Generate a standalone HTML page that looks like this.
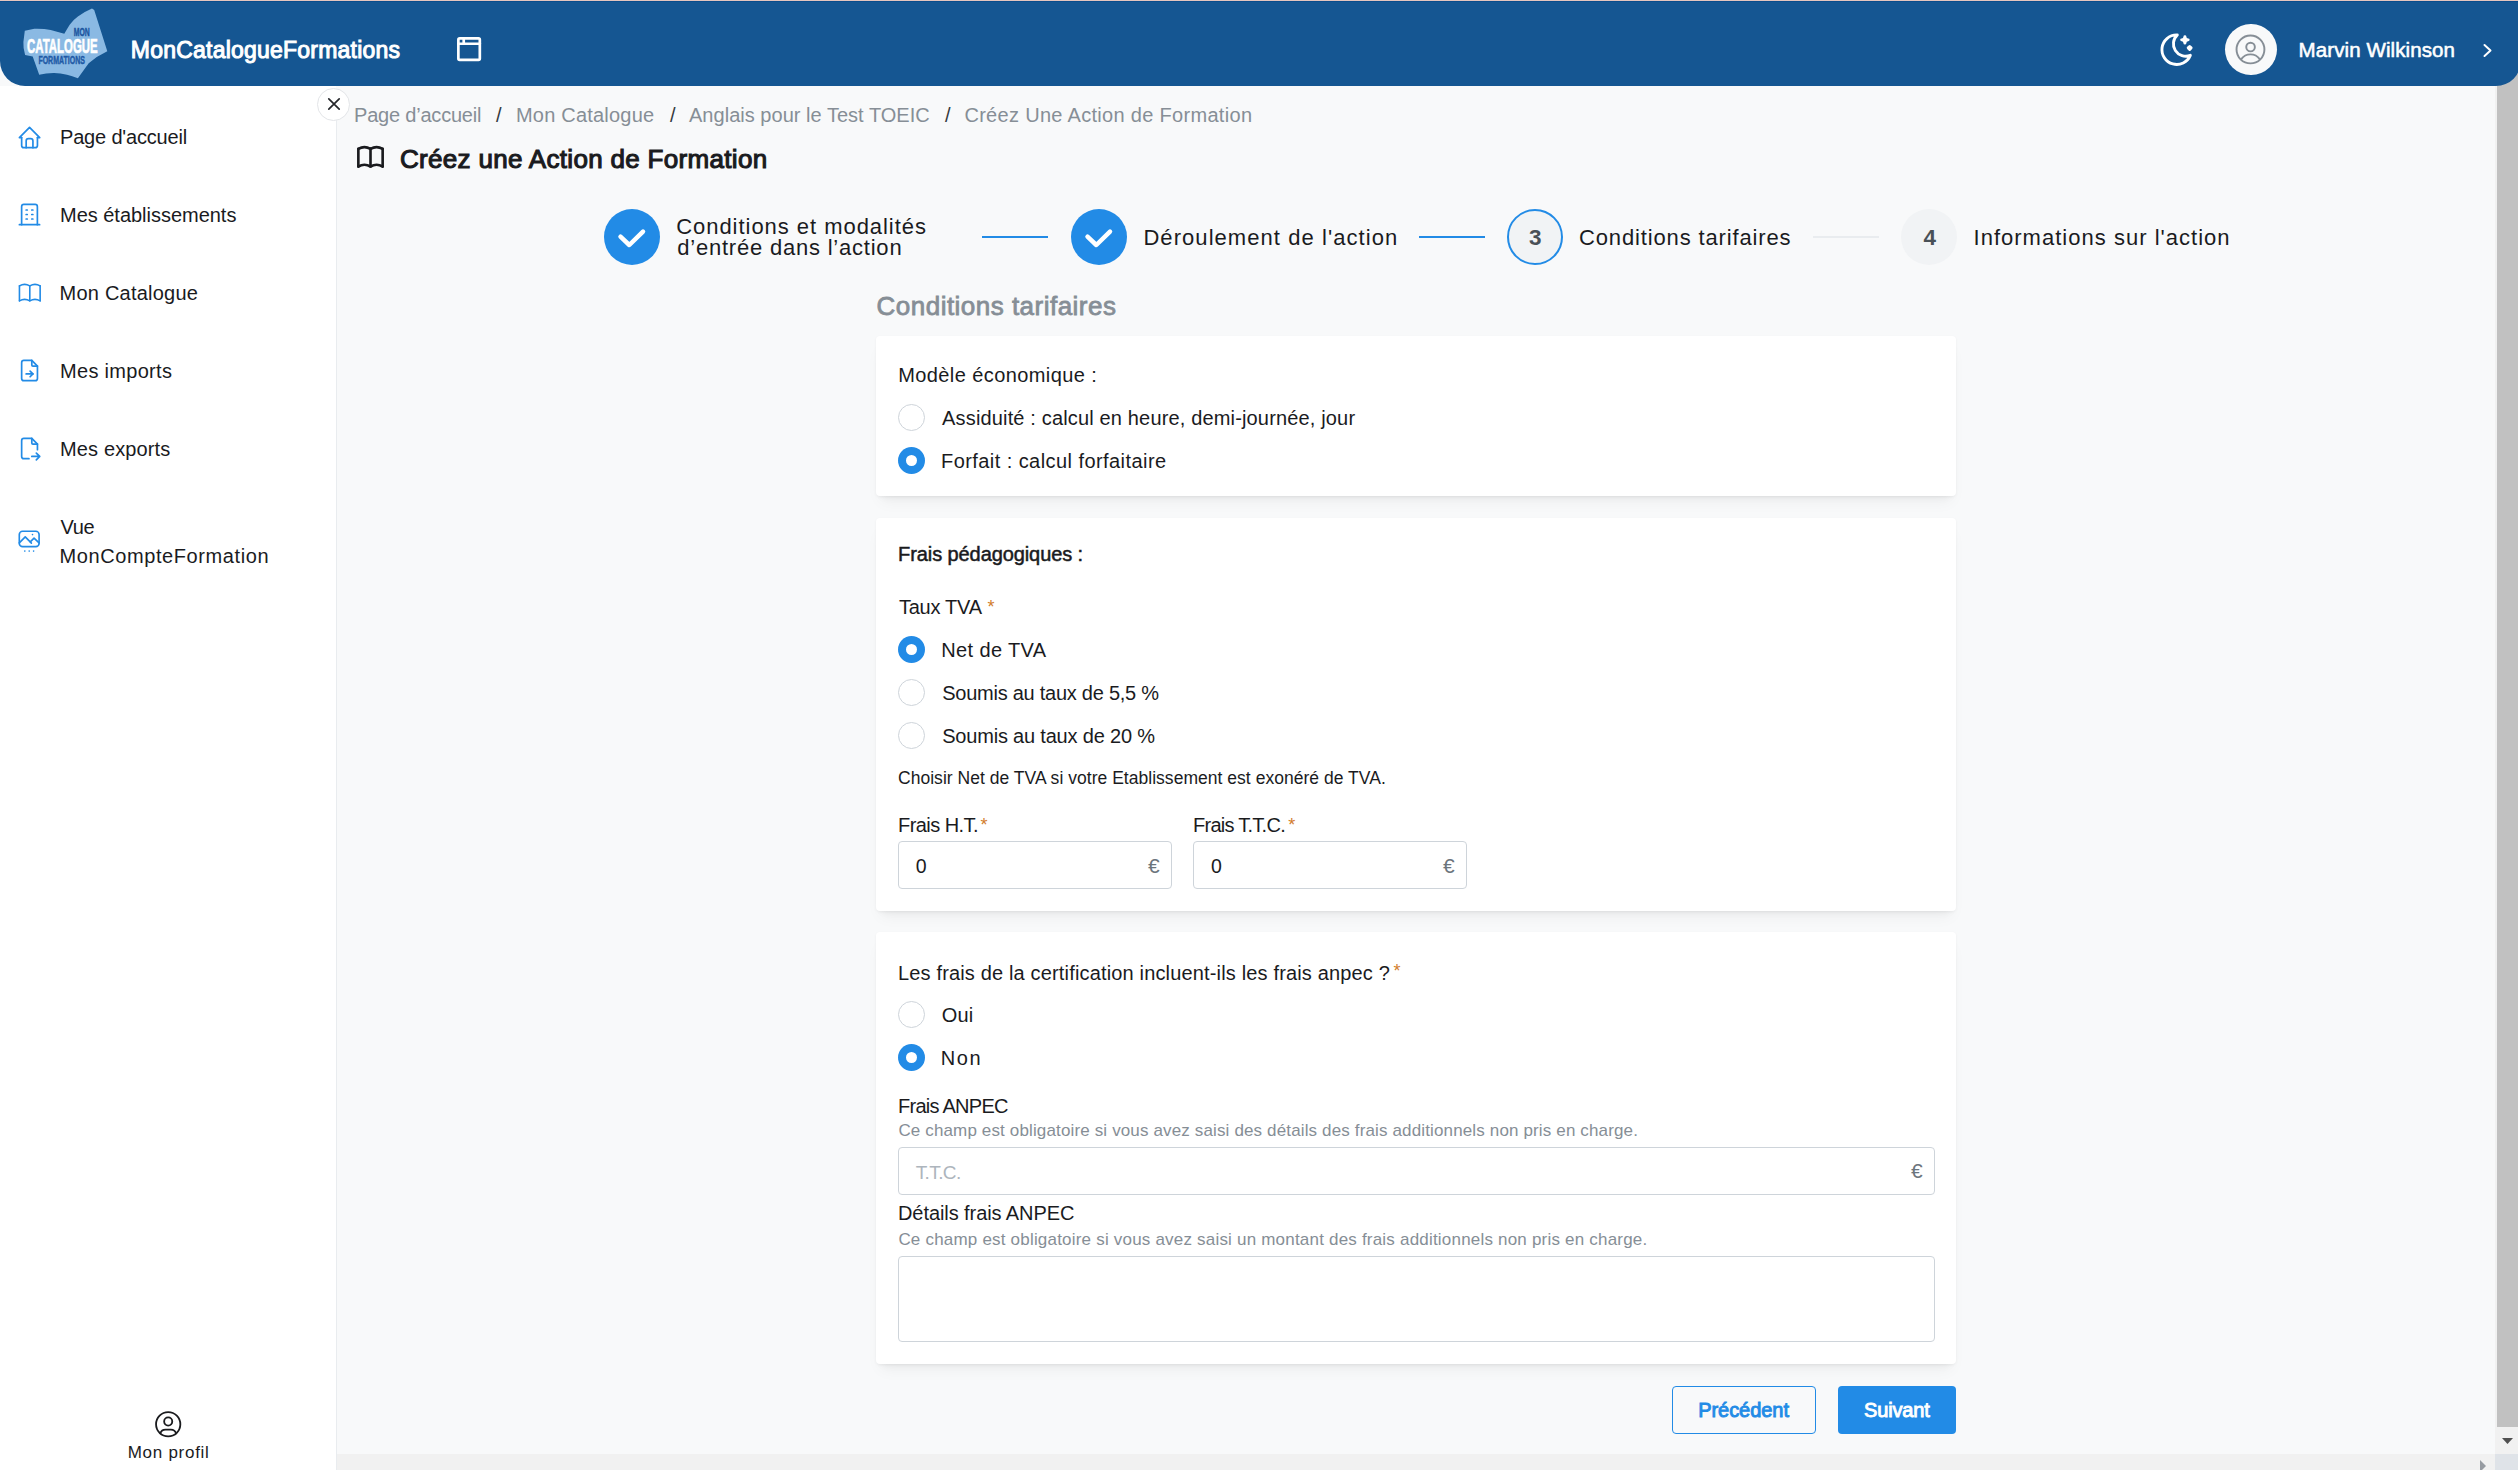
<!DOCTYPE html>
<html lang="fr">
<head>
<meta charset="utf-8">
<title>Créez une Action de Formation</title>
<style>
*{box-sizing:border-box;margin:0;padding:0}
html,body{width:2518px;height:1470px;overflow:hidden;background:#f8f9fa;font-family:"Liberation Sans",sans-serif}
.a{position:absolute}
.t{position:absolute;white-space:pre;line-height:1;font-family:"Liberation Sans",sans-serif}
.card{position:absolute;left:876px;width:1080px;background:#fff;border-radius:4px;box-shadow:0 1px 3px rgba(0,0,0,.05),rgba(0,0,0,.05) 0 10px 15px -5px,rgba(0,0,0,.04) 0 7px 7px -5px}
.rad{position:absolute;left:898px;width:27px;height:27px;border-radius:50%;border:1px solid #ced4da;background:#fff}
.rad.on{border:none;background:#228be6}
.rad.on::after{content:"";position:absolute;left:8px;top:8px;width:11px;height:11px;border-radius:50%;background:#fff}
.inp{position:absolute;border:1px solid #ced4da;border-radius:4px;background:#fff}
svg.ic{position:absolute;overflow:visible}
</style>
</head>
<body>
<!-- scrollbars -->
<div class="a" style="left:2495px;top:0;width:23px;height:1454px;background:#f1f1f1"></div>
<div class="a" style="left:2497px;top:40px;width:21px;height:1387px;background:#c1c1c1"></div>
<svg class="ic" style="left:2500px;top:1434px" width="16" height="14"><path d="M2 4h11l-5.5 6z" fill="#505050"/></svg>
<div class="a" style="left:337px;top:1454px;width:2158px;height:16px;background:#f1f1f1"></div>
<svg class="ic" style="left:2478px;top:1458px" width="12" height="12"><path d="M2 2v12l6-6z" fill="#969ba1"/></svg>
<div class="a" style="left:2495px;top:1454px;width:23px;height:16px;background:#dfe3e8"></div>

<!-- top line + header -->
<div class="a" style="left:0;top:0;width:2518px;height:1px;background:#e5c5be"></div>
<div class="a" style="left:0;top:1px;width:2521px;height:84.6px;background:#155692;border-top:1px solid #0a4c8c;border-radius:0 0 25px 25px"></div>

<!-- logo -->
<svg class="ic" style="left:0;top:0" width="120" height="86">
<path d="M24.8 30.7 L34.3 28.8 Q44 28.6 50.7 29.9 L64.3 33.7 Q67 29 69.7 24.7 Q73 20 77.9 16.5 Q85 11.5 92 8.6 L94.2 10 L107.3 51.3 Q97 56 88.7 63.3 L77.9 78.3 Q72 76 67 74.7 Q60 73 53.4 73.1 Q46 73.3 39.2 74.7 L32.7 56.5 L25.1 54.9 Q23 48 23.4 42.1 Z" fill="#8ab9e3"/>
<text x="73.8" y="35.6" font-family="Liberation Sans" font-weight="700" font-size="11.6" fill="#1b559f" stroke="#1b559f" stroke-width="0.45" textLength="16" lengthAdjust="spacingAndGlyphs">MON</text>
<text x="27" y="52.7" font-family="Liberation Sans" font-weight="700" font-size="20.8" fill="#ffffff" stroke="#ffffff" stroke-width="0.7" textLength="70.7" lengthAdjust="spacingAndGlyphs">CATALOGUE</text>
<text x="38.4" y="64.4" font-family="Liberation Sans" font-weight="700" font-size="11.8" fill="#1f5aa6" stroke="#1f5aa6" stroke-width="0.45" textLength="46.5" lengthAdjust="spacingAndGlyphs">FORMATIONS</text>
</svg>

<!-- browser icon -->
<svg class="ic" style="left:453.1px;top:32.9px" width="32.2" height="32.2" viewBox="0 0 24 24" fill="none" stroke="#fff" stroke-width="2" stroke-linecap="round" stroke-linejoin="round"><path d="M4 5a1 1 0 0 1 1-1h14a1 1 0 0 1 1 1v14a1 1 0 0 1-1 1h-14a1 1 0 0 1-1-1z"/><path d="M4 8h16"/><path d="M8 4v4"/></svg>

<!-- moon -->
<svg class="ic" style="left:2156.9px;top:29.9px" width="39.4" height="39.4" viewBox="0 0 24 24" fill="none" stroke="#fff" stroke-width="1.75" stroke-linecap="round" stroke-linejoin="round"><path d="M12 3c.132 0 .263 0 .393 0a7.5 7.5 0 0 0 7.92 12.446a9 9 0 1 1 -8.313 -12.454z"/><path d="M17 4a2 2 0 0 0 2 2a2 2 0 0 0 -2 2a2 2 0 0 0 -2 -2a2 2 0 0 0 2 -2" fill="#fff"/><path d="M19.9 10l.9 .9l-.9 .9l-.9 -.9z" fill="#fff"/></svg>

<!-- avatar -->
<div class="a" style="left:2225px;top:23.8px;width:52px;height:51.5px;border-radius:50%;background:#f8f9fa"></div>
<svg class="ic" style="left:2232.4px;top:30.5px" width="36.96" height="36.96" viewBox="0 0 24 24" fill="none" stroke="#868e96" stroke-width="1.25" stroke-linecap="round" stroke-linejoin="round"><circle cx="12" cy="12" r="9.05"/><circle cx="12.05" cy="10.45" r="2.8"/><path d="M6 18.3a7.36 7.36 0 0 1 12 0"/></svg>
<!-- chevron -->
<svg class="ic" style="left:2480px;top:40px" width="16" height="20" fill="none" stroke="#fff" stroke-width="2" stroke-linecap="round" stroke-linejoin="round"><path d="M4.5 5l6 5.5l-6 5.5"/></svg>

<!-- sidebar -->
<div class="a" style="left:0;top:86px;width:336px;height:1384px;background:#fff"></div>
<div class="a" style="left:336px;top:104px;width:1px;height:1366px;background:#e9ecef"></div>
<svg class="ic" style="left:15.94px;top:124.2px" width="27.1" height="27.1" viewBox="0 0 24 24" fill="none" stroke="#228be6" stroke-width="1.5" stroke-linecap="round" stroke-linejoin="round"><path d="M5 12l-2 0l9 -9l9 9l-2 0"/><path d="M5 12v7a2 2 0 0 0 2 2h10a2 2 0 0 0 2 -2v-7"/><path d="M9 21v-6a2 2 0 0 1 2 -2h2a2 2 0 0 1 2 2v6"/></svg>
<svg class="ic" style="left:16.2px;top:200.7px" width="27" height="27" viewBox="0 0 24 24" fill="none" stroke="#228be6" stroke-width="1.5" stroke-linecap="round" stroke-linejoin="round"><path d="M3 21l18 0"/><path d="M9 8l1 0"/><path d="M9 12l1 0"/><path d="M9 16l1 0"/><path d="M14 8l1 0"/><path d="M14 12l1 0"/><path d="M14 16l1 0"/><path d="M5 21v-16a2 2 0 0 1 2 -2h10a2 2 0 0 1 2 2v16"/></svg>
<svg class="ic" style="left:15.65px;top:278.6px" width="27.6" height="27.6" viewBox="0 0 24 24" fill="none" stroke="#228be6" stroke-width="1.4" stroke-linecap="round" stroke-linejoin="round"><path d="M3 19a9 9 0 0 1 9 0a9 9 0 0 1 9 0"/><path d="M3 6a9 9 0 0 1 9 0a9 9 0 0 1 9 0"/><path d="M3 6l0 13"/><path d="M12 6l0 13"/><path d="M21 6l0 13"/></svg>
<svg class="ic" style="left:16.1px;top:356.5px" width="27.1" height="27.1" viewBox="0 0 24 24" fill="none" stroke="#228be6" stroke-width="1.5" stroke-linecap="round" stroke-linejoin="round"><path d="M14 3v4a1 1 0 0 0 1 1h4"/><path d="M17 21h-10a2 2 0 0 1 -2 -2v-14a2 2 0 0 1 2 -2h7l5 5v11a2 2 0 0 1 -2 2z"/><path d="M9 15h6"/><path d="M12.5 17.5l2.5 -2.5l-2.5 -2.5"/></svg>
<svg class="ic" style="left:16.1px;top:434.8px" width="27.1" height="27.1" viewBox="0 0 24 24" fill="none" stroke="#228be6" stroke-width="1.5" stroke-linecap="round" stroke-linejoin="round"><path d="M14 3v4a1 1 0 0 0 1 1h4"/><path d="M11.5 21h-4.5a2 2 0 0 1 -2 -2v-14a2 2 0 0 1 2 -2h7l5 5v5m-5 6h7m-3 -3l3 3l-3 3"/></svg>
<svg class="ic" style="left:16.2px;top:528.3px" width="26.4" height="26.4" viewBox="0 0 24 24" fill="none" stroke="#228be6" stroke-width="1.5" stroke-linecap="round" stroke-linejoin="round"><path d="M15 6l.01 0"/><path d="M3 6a3 3 0 0 1 3 -3h12a3 3 0 0 1 3 3v8a3 3 0 0 1 -3 3h-12a3 3 0 0 1 -3 -3z"/><path d="M3 13.5L8.4 8.1L14 13.7"/><path d="M13 12.6L16.4 9.2L21 13.6"/><path d="M8 21l.01 0"/><path d="M12 21l.01 0"/><path d="M16 21l.01 0"/></svg>
<!-- mon profil icon -->
<svg class="ic" style="left:151.9px;top:1407.7px" width="32.4" height="32.4" viewBox="0 0 24 24" fill="none" stroke="#1a1b1e" stroke-width="1.35" stroke-linecap="round" stroke-linejoin="round"><circle cx="12" cy="12" r="9"/><circle cx="12" cy="10" r="3"/><path d="M6.168 18.849a4 4 0 0 1 3.832 -2.849h4a4 4 0 0 1 3.834 2.855"/></svg>

<!-- close button -->
<div class="a" style="left:317.3px;top:87.5px;width:33.2px;height:33.2px;border-radius:50%;background:#fff;border:1.6px solid #e3e5e8"></div>
<svg class="ic" style="left:327.8px;top:98.2px" width="12" height="12" fill="none" stroke="#25272b" stroke-width="1.7" stroke-linecap="round"><path d="M0.8 0.8L11.2 11.2M11.2 0.8L0.8 11.2"/></svg>

<!-- title book icon -->
<svg class="ic" style="left:356.8px;top:146.1px" width="27" height="21.8" viewBox="2 3.85 20 16.1" preserveAspectRatio="none" fill="none" stroke="#1a1b1e" stroke-width="1.95" stroke-linecap="round" stroke-linejoin="round"><path d="M3 19a9 9 0 0 1 9 0a9 9 0 0 1 9 0"/><path d="M3 6a9 9 0 0 1 9 0a9 9 0 0 1 9 0"/><path d="M3 6l0 13"/><path d="M12 6l0 13"/><path d="M21 6l0 13"/></svg>

<!-- stepper -->
<div class="a" style="left:603.5px;top:208.8px;width:56px;height:56px;border-radius:50%;background:#228be6"></div>
<svg class="ic" style="left:603.5px;top:208.8px" width="56" height="56" fill="none" stroke="#fff" stroke-width="4.5" stroke-linecap="round" stroke-linejoin="round"><path d="M16.5 27.7L25.3 36L39 22.6"/></svg>
<div class="a" style="left:982px;top:236px;width:66px;height:2px;background:#228be6"></div>
<div class="a" style="left:1070.5px;top:208.8px;width:56px;height:56px;border-radius:50%;background:#228be6"></div>
<svg class="ic" style="left:1070.5px;top:208.8px" width="56" height="56" fill="none" stroke="#fff" stroke-width="4.5" stroke-linecap="round" stroke-linejoin="round"><path d="M16.5 27.7L25.3 36L39 22.6"/></svg>
<div class="a" style="left:1419px;top:236px;width:66px;height:2px;background:#228be6"></div>
<div class="a" style="left:1506.5px;top:208.8px;width:56px;height:56px;border-radius:50%;background:#f1f3f5;border:2px solid #228be6"></div>
<div class="a" style="left:1813px;top:236px;width:66px;height:2px;background:#e9ecef"></div>
<div class="a" style="left:1901px;top:208.8px;width:56px;height:56px;border-radius:50%;background:#f1f3f5"></div>

<!-- cards -->
<div class="card" style="top:336px;height:160px"></div>
<div class="card" style="top:518px;height:393px"></div>
<div class="card" style="top:932px;height:432px"></div>

<!-- radios -->
<div class="rad" style="top:404px"></div>
<div class="rad on" style="top:447px"></div>
<div class="rad on" style="top:636.2px"></div>
<div class="rad" style="top:679px"></div>
<div class="rad" style="top:721.7px"></div>
<div class="rad" style="top:1001px"></div>
<div class="rad on" style="top:1044px"></div>

<!-- inputs -->
<div class="inp" style="left:898px;top:840.5px;width:274px;height:48px"></div>
<div class="inp" style="left:1193px;top:840.5px;width:274px;height:48px"></div>
<div class="inp" style="left:898px;top:1147px;width:1037px;height:48px"></div>
<div class="inp" style="left:898px;top:1255.5px;width:1037px;height:86px"></div>

<!-- buttons -->
<div class="a" style="left:1672px;top:1386px;width:144px;height:48px;border:1px solid #228be6;border-radius:4px"></div>
<div class="a" style="left:1838px;top:1386px;width:118px;height:48px;background:#228be6;border-radius:4px"></div>

<div class="t" style="left:130.80px;top:38.83px;font-size:23px;font-weight:400;color:#ffffff;letter-spacing:0.217px;-webkit-text-stroke:1px #fff;">MonCatalogueFormations</div>
<div class="t" style="left:2298.60px;top:39.55px;font-size:20.5px;font-weight:400;color:#ffffff;letter-spacing:0.099px;-webkit-text-stroke:0.55px #fff;">Marvin Wilkinson</div>
<div class="t" style="left:60.00px;top:126.67px;font-size:20px;font-weight:400;color:#1a1b1e;letter-spacing:-0.171px;">Page d'accueil</div>
<div class="t" style="left:60.00px;top:205.07px;font-size:20px;font-weight:400;color:#1a1b1e;letter-spacing:-0.020px;">Mes établissements</div>
<div class="t" style="left:59.60px;top:282.77px;font-size:20px;font-weight:400;color:#1a1b1e;letter-spacing:0.223px;">Mon Catalogue</div>
<div class="t" style="left:60.00px;top:361.27px;font-size:20px;font-weight:400;color:#1a1b1e;letter-spacing:0.299px;">Mes imports</div>
<div class="t" style="left:60.00px;top:438.77px;font-size:20px;font-weight:400;color:#1a1b1e;letter-spacing:0.137px;">Mes exports</div>
<div class="t" style="left:60.50px;top:516.97px;font-size:20px;font-weight:400;color:#1a1b1e;letter-spacing:-0.360px;">Vue</div>
<div class="t" style="left:59.50px;top:545.87px;font-size:20px;font-weight:400;color:#1a1b1e;letter-spacing:0.592px;">MonCompteFormation</div>
<div class="t" style="left:127.70px;top:1444.21px;font-size:17px;font-weight:400;color:#1a1b1e;letter-spacing:0.726px;">Mon profil</div>
<div class="t" style="left:354.00px;top:104.57px;font-size:20px;font-weight:400;color:#868e96;letter-spacing:-0.203px;">Page d’accueil</div>
<div class="t" style="left:496.00px;top:104.57px;font-size:20px;font-weight:400;color:#343a40;letter-spacing:0.000px;">/</div>
<div class="t" style="left:516.00px;top:104.57px;font-size:20px;font-weight:400;color:#868e96;letter-spacing:0.207px;">Mon Catalogue</div>
<div class="t" style="left:670.00px;top:104.57px;font-size:20px;font-weight:400;color:#343a40;letter-spacing:0.000px;">/</div>
<div class="t" style="left:689.00px;top:104.57px;font-size:20px;font-weight:400;color:#868e96;letter-spacing:0.024px;">Anglais pour le Test TOEIC</div>
<div class="t" style="left:945.00px;top:104.57px;font-size:20px;font-weight:400;color:#343a40;letter-spacing:0.000px;">/</div>
<div class="t" style="left:964.40px;top:104.57px;font-size:20px;font-weight:400;color:#868e96;letter-spacing:0.307px;">Créez Une Action de Formation</div>
<div class="t" style="left:400.00px;top:145.89px;font-size:26px;font-weight:400;color:#1a1b1e;letter-spacing:0.311px;-webkit-text-stroke:1.1px #1a1b1e;">Créez une Action de Formation</div>
<div class="t" style="left:676.20px;top:215.68px;font-size:22px;font-weight:400;color:#1a1b1e;letter-spacing:0.960px;">Conditions et modalités</div>
<div class="t" style="left:677.20px;top:237.28px;font-size:22px;font-weight:400;color:#1a1b1e;letter-spacing:0.787px;">d’entrée dans l’action</div>
<div class="t" style="left:1143.40px;top:226.68px;font-size:22px;font-weight:400;color:#1a1b1e;letter-spacing:1.063px;">Déroulement de l'action</div>
<div class="t" style="left:1579.00px;top:226.68px;font-size:22px;font-weight:400;color:#1a1b1e;letter-spacing:0.854px;">Conditions tarifaires</div>
<div class="t" style="left:1973.50px;top:226.68px;font-size:22px;font-weight:400;color:#1a1b1e;letter-spacing:1.017px;">Informations sur l'action</div>
<div class="t" style="left:1528.90px;top:226.65px;font-size:22.5px;font-weight:700;color:#495057;letter-spacing:0.000px;">3</div>
<div class="t" style="left:1923.40px;top:226.65px;font-size:22.5px;font-weight:700;color:#495057;letter-spacing:0.000px;">4</div>
<div class="t" style="left:876.60px;top:292.99px;font-size:26px;font-weight:400;color:#868e96;letter-spacing:0.476px;-webkit-text-stroke:0.8px #868e96;">Conditions tarifaires</div>
<div class="t" style="left:898.20px;top:364.97px;font-size:20px;font-weight:400;color:#1a1b1e;letter-spacing:0.413px;">Modèle économique :</div>
<div class="t" style="left:942.10px;top:408.47px;font-size:20px;font-weight:400;color:#1a1b1e;letter-spacing:0.156px;">Assiduité : calcul en heure, demi-journée, jour</div>
<div class="t" style="left:941.00px;top:451.37px;font-size:20px;font-weight:400;color:#1a1b1e;letter-spacing:0.434px;">Forfait : calcul forfaitaire</div>
<div class="t" style="left:898.10px;top:544.47px;font-size:20px;font-weight:400;color:#1a1b1e;letter-spacing:-0.091px;-webkit-text-stroke:0.5px #1a1b1e;">Frais pédagogiques :</div>
<div class="t" style="left:899.00px;top:596.97px;font-size:20px;font-weight:400;color:#1a1b1e;letter-spacing:-0.268px;">Taux TVA</div>
<div class="t" style="left:941.20px;top:640.47px;font-size:20px;font-weight:400;color:#1a1b1e;letter-spacing:0.383px;">Net de TVA</div>
<div class="t" style="left:942.20px;top:683.47px;font-size:20px;font-weight:400;color:#1a1b1e;letter-spacing:-0.249px;">Soumis au taux de 5,5 %</div>
<div class="t" style="left:942.20px;top:726.47px;font-size:20px;font-weight:400;color:#1a1b1e;letter-spacing:-0.191px;">Soumis au taux de 20 %</div>
<div class="t" style="left:898.00px;top:770.39px;font-size:17.5px;font-weight:400;color:#1a1b1e;letter-spacing:0.029px;">Choisir Net de TVA si votre Etablissement est exonéré de TVA.</div>
<div class="t" style="left:898.00px;top:815.07px;font-size:20px;font-weight:400;color:#1a1b1e;letter-spacing:-0.556px;">Frais H.T.</div>
<div class="t" style="left:1193.10px;top:815.07px;font-size:20px;font-weight:400;color:#1a1b1e;letter-spacing:-0.742px;">Frais T.T.C.</div>
<div class="t" style="left:915.80px;top:856.69px;font-size:19.5px;font-weight:400;color:#1a1b1e;letter-spacing:0.000px;">0</div>
<div class="t" style="left:1211.00px;top:856.69px;font-size:19.5px;font-weight:400;color:#1a1b1e;letter-spacing:0.000px;">0</div>
<div class="t" style="left:898.00px;top:963.07px;font-size:20px;font-weight:400;color:#1a1b1e;letter-spacing:0.159px;">Les frais de la certification incluent-ils les frais anpec ?</div>
<div class="t" style="left:941.70px;top:1004.77px;font-size:20px;font-weight:400;color:#1a1b1e;letter-spacing:0.160px;">Oui</div>
<div class="t" style="left:940.70px;top:1047.77px;font-size:20px;font-weight:400;color:#1a1b1e;letter-spacing:1.567px;">Non</div>
<div class="t" style="left:898.00px;top:1095.87px;font-size:20px;font-weight:400;color:#1a1b1e;letter-spacing:-0.736px;">Frais ANPEC</div>
<div class="t" style="left:898.40px;top:1122.41px;font-size:17px;font-weight:400;color:#868e96;letter-spacing:0.142px;">Ce champ est obligatoire si vous avez saisi des détails des frais additionnels non pris en charge.</div>
<div class="t" style="left:915.70px;top:1163.12px;font-size:19px;font-weight:400;color:#adb5bd;letter-spacing:-0.596px;">T.T.C.</div>
<div class="t" style="left:898.00px;top:1203.27px;font-size:20px;font-weight:400;color:#1a1b1e;letter-spacing:-0.077px;">Détails frais ANPEC</div>
<div class="t" style="left:898.40px;top:1230.81px;font-size:17px;font-weight:400;color:#868e96;letter-spacing:0.201px;">Ce champ est obligatoire si vous avez saisi un montant des frais additionnels non pris en charge.</div>
<div class="t" style="left:1147.90px;top:854.62px;font-size:21px;font-weight:400;color:#6c757d;letter-spacing:0.000px;">€</div>
<div class="t" style="left:1443.00px;top:854.62px;font-size:21px;font-weight:400;color:#6c757d;letter-spacing:0.000px;">€</div>
<div class="t" style="left:1911.00px;top:1160.22px;font-size:21px;font-weight:400;color:#6c757d;letter-spacing:0.000px;">€</div>
<div class="t" style="left:1698.20px;top:1400.37px;font-size:20px;font-weight:400;color:#228be6;letter-spacing:-0.052px;-webkit-text-stroke:0.9px #228be6;">Précédent</div>
<div class="t" style="left:1864.00px;top:1400.37px;font-size:20px;font-weight:400;color:#ffffff;letter-spacing:-0.159px;-webkit-text-stroke:0.9px #fff;">Suivant</div>

<!-- asterisks -->
<div class="t" style="left:987.5px;top:598px;font-size:18px;color:#d27c2c">*</div>
<div class="t" style="left:980.4px;top:816px;font-size:18px;color:#d27c2c">*</div>
<div class="t" style="left:1288.2px;top:816px;font-size:18px;color:#d27c2c">*</div>
<div class="t" style="left:1393.5px;top:962px;font-size:18px;color:#d27c2c">*</div>
</body>
</html>
